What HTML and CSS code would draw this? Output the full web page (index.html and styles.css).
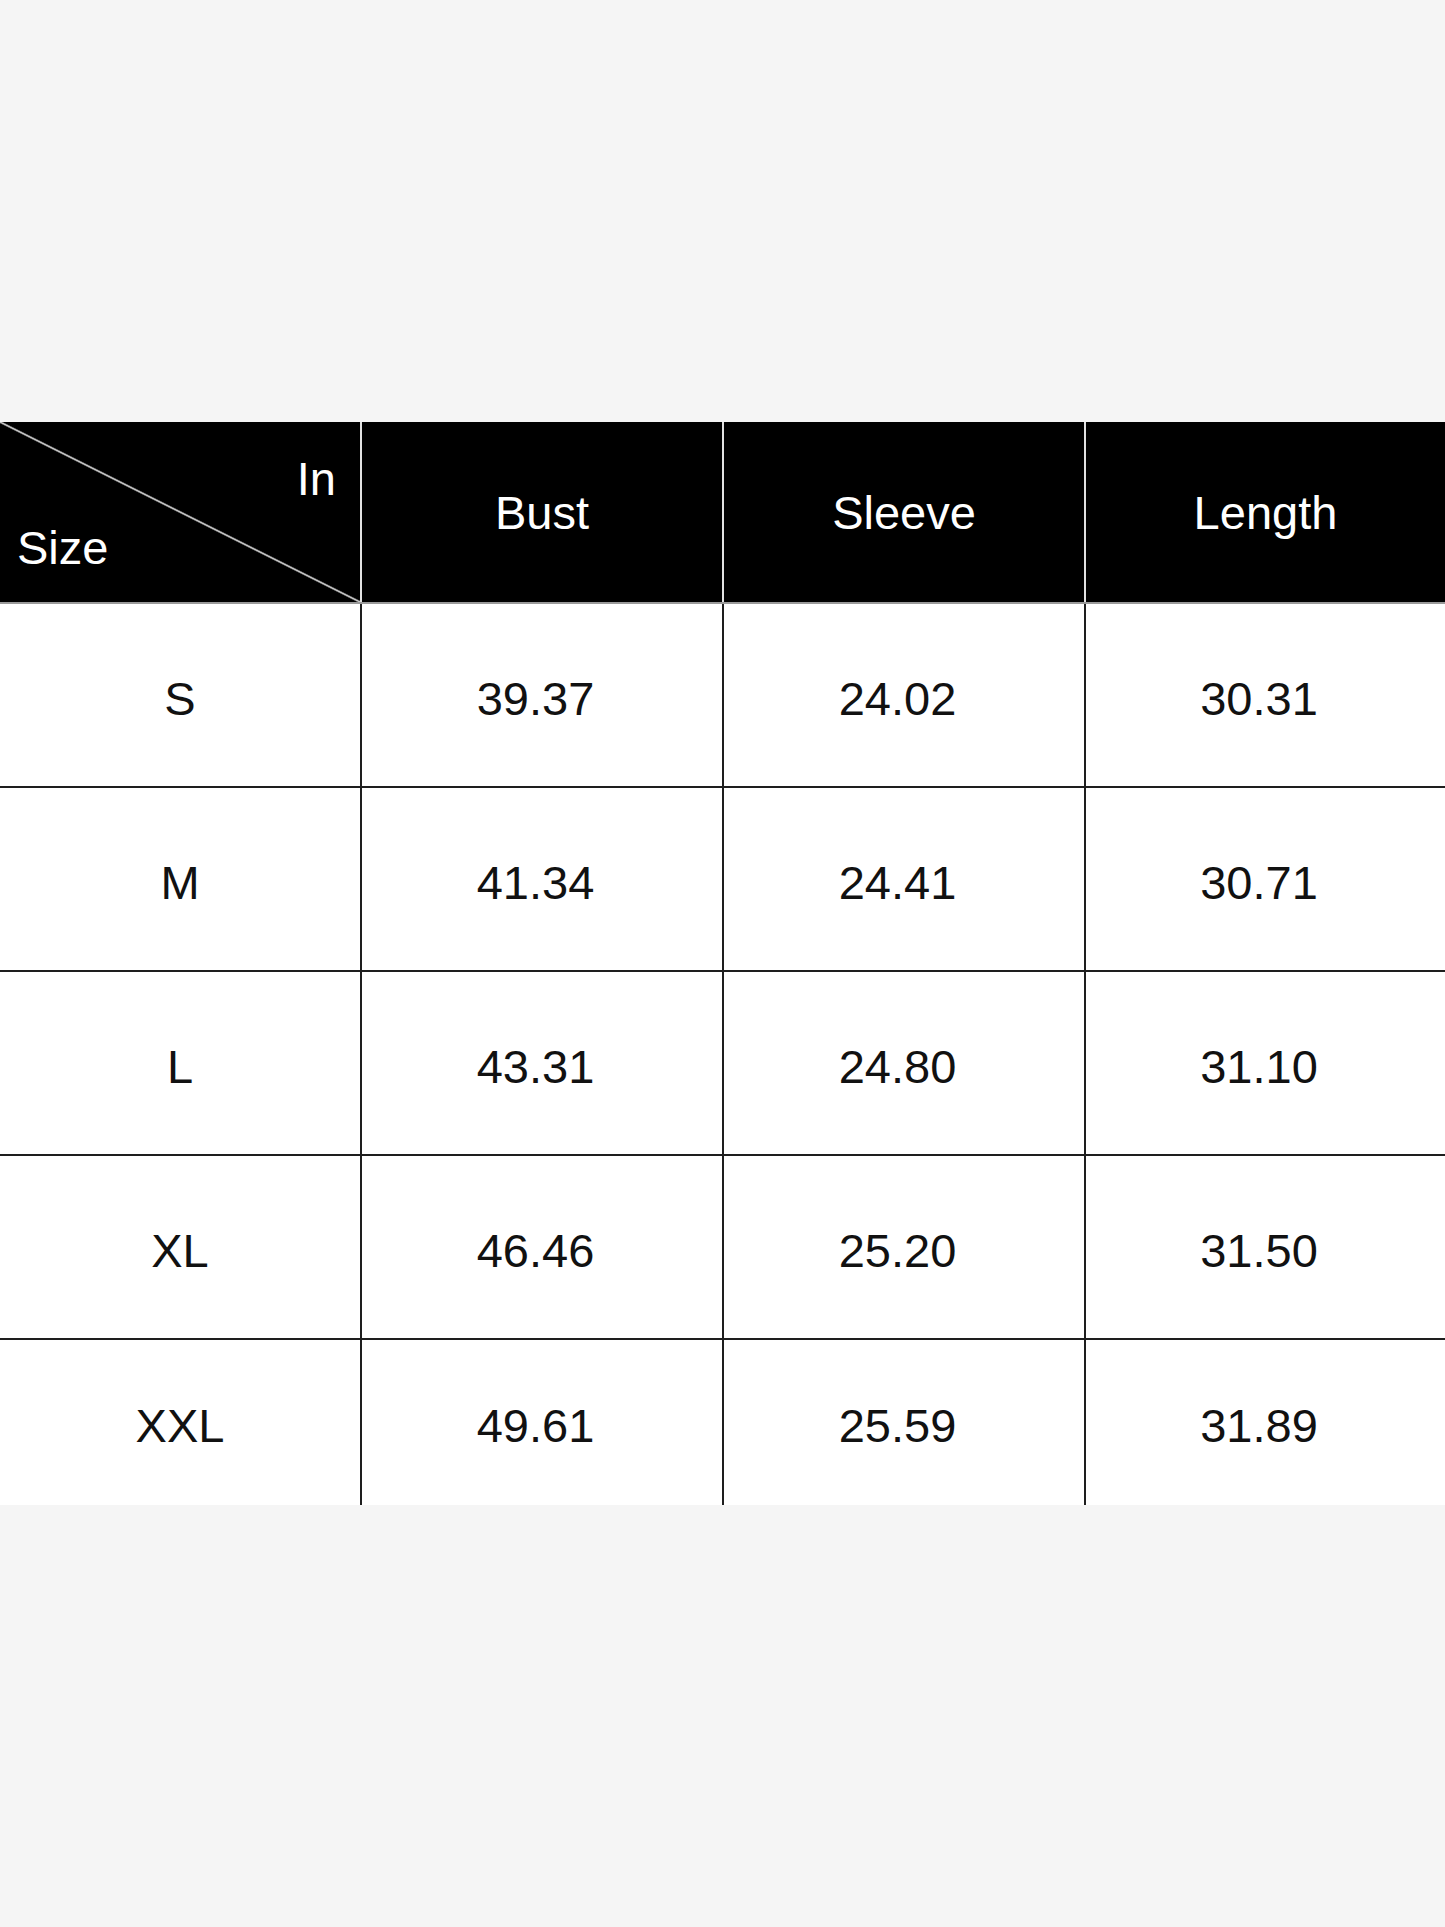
FILE: index.html
```html
<!DOCTYPE html>
<html lang="en">
<head>
<meta charset="utf-8">
<title>Size Chart</title>
<link rel="stylesheet" href="styles.css">
</head>
<body>
<main class="page">
  <section class="chart">
    <div class="row head">
      <div class="cell corner">
        <span class="corner-in">In</span>
        <span class="corner-size">Size</span>
      </div>
      <div class="cell">Bust</div>
      <div class="cell">Sleeve</div>
      <div class="cell">Length</div>
    </div>
    <div class="row body">
      <div class="cell">S</div>
      <div class="cell num">39.37</div>
      <div class="cell num">24.02</div>
      <div class="cell num">30.31</div>
    </div>
    <div class="row body">
      <div class="cell">M</div>
      <div class="cell num">41.34</div>
      <div class="cell num">24.41</div>
      <div class="cell num">30.71</div>
    </div>
    <div class="row body">
      <div class="cell">L</div>
      <div class="cell num">43.31</div>
      <div class="cell num">24.80</div>
      <div class="cell num">31.10</div>
    </div>
    <div class="row body">
      <div class="cell">XL</div>
      <div class="cell num">46.46</div>
      <div class="cell num">25.20</div>
      <div class="cell num">31.50</div>
    </div>
    <div class="row body last">
      <div class="cell">XXL</div>
      <div class="cell num">49.61</div>
      <div class="cell num">25.59</div>
      <div class="cell num">31.89</div>
    </div>
  </section>
</main>
</body>
</html>
```
FILE: styles.css
```css
* { box-sizing: border-box; }
html, body {
  margin: 0;
  padding: 0;
  background: #f5f5f5;
}
.page {
  width: 1445px;
  height: 1927px;
  padding-top: 422px;
  font-family: "Liberation Sans", Arial, Helvetica, sans-serif;
  font-size: 47px;
  line-height: 1;
}
.chart {
  display: flex;
  flex-direction: column;
}
.row {
  display: grid;
  grid-template-columns: 360px 362px 362px 361px;
}
.cell {
  display: flex;
  align-items: center;
  justify-content: center;
}
.head {
  height: 182px;
  background: #000;
  color: #fff;
  border-bottom: 2px solid #9a9a9a;
}
.head .cell + .cell {
  border-left: 2px solid #e2e2e2;
}
.corner {
  flex-direction: column;
  align-items: stretch;
  justify-content: flex-start;
  padding: 33px 24px 0 17px;
  background: linear-gradient(to top right, transparent calc(50% - 1.6px), #e4e4e4 50%, transparent calc(50% + 1.6px));
}
.corner-in {
  align-self: flex-end;
}
.corner-size {
  align-self: flex-start;
  margin-top: 22px;
}
.body {
  height: 184px;
  background: #fff;
  color: #111;
  border-bottom: 2px solid #1e1e1e;
}
.body.last {
  height: 165px;
  border-bottom: none;
}
.body .cell {
  padding-top: 6px;
}
.body .cell + .cell {
  border-left: 2px solid #1e1e1e;
}
.body .num {
  padding-right: 13px;
}
```
